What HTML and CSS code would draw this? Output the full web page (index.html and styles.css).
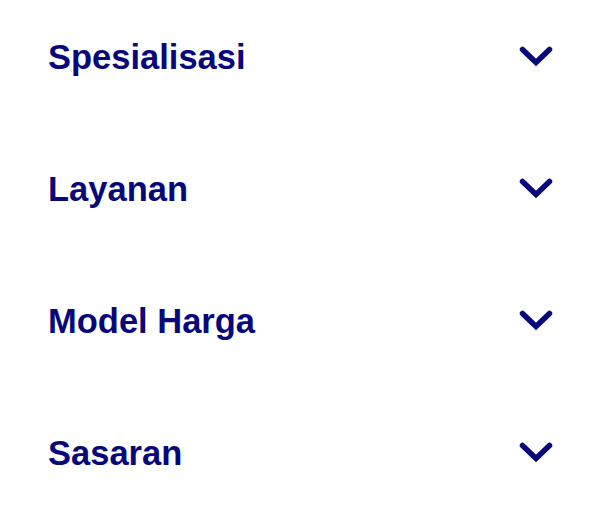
FILE: index.html
```html
<!DOCTYPE html>
<html lang="id">
<head>
  <meta charset="UTF-8">
  <meta name="viewport" content="width=device-width, initial-scale=1.0">
  <title>Filter</title>
  <link rel="stylesheet" href="styles.css">
</head>
<body>
  <div class="filter-list">
    <button class="filter-item">
      <span class="filter-label">Spesialisasi</span>
      <svg class="chevron" viewBox="0 0 34 22" width="34" height="22"><path d="M3.5 3.5 L17 16.5 L30.5 3.5"/></svg>
    </button>
    <button class="filter-item">
      <span class="filter-label">Layanan</span>
      <svg class="chevron" viewBox="0 0 34 22" width="34" height="22"><path d="M3.5 3.5 L17 16.5 L30.5 3.5"/></svg>
    </button>
    <button class="filter-item">
      <span class="filter-label">Model Harga</span>
      <svg class="chevron" viewBox="0 0 34 22" width="34" height="22"><path d="M3.5 3.5 L17 16.5 L30.5 3.5"/></svg>
    </button>
    <button class="filter-item">
      <span class="filter-label">Sasaran</span>
      <svg class="chevron" viewBox="0 0 34 22" width="34" height="22"><path d="M3.5 3.5 L17 16.5 L30.5 3.5"/></svg>
    </button>
  </div>
</body>
</html>
```

FILE: styles.css
```css
:root {
  --navy: #08087a;
}
body {
  margin: 0;
  background: #fff;
  font-family: 'Liberation Sans', Arial, sans-serif;
}
.filter-list {
  display: flex;
  flex-direction: column;
  gap: 92px;
  padding: 37px 48px 0 48px;
}
.filter-item {
  display: flex;
  align-items: center;
  justify-content: space-between;
  height: 40px;
  padding: 0;
  border: none;
  background: none;
  color: var(--navy);
  font-family: inherit;
  cursor: pointer;
}
.filter-label {
  font-size: 34.5px;
  font-weight: 700;
  line-height: 40px;
}
.chevron {
  margin-top: -1px;
  margin-right: -1px;
}
.chevron path {
  fill: none;
  stroke: var(--navy);
  stroke-width: 5.5;
  stroke-linecap: round;
  stroke-linejoin: miter;
}
```
